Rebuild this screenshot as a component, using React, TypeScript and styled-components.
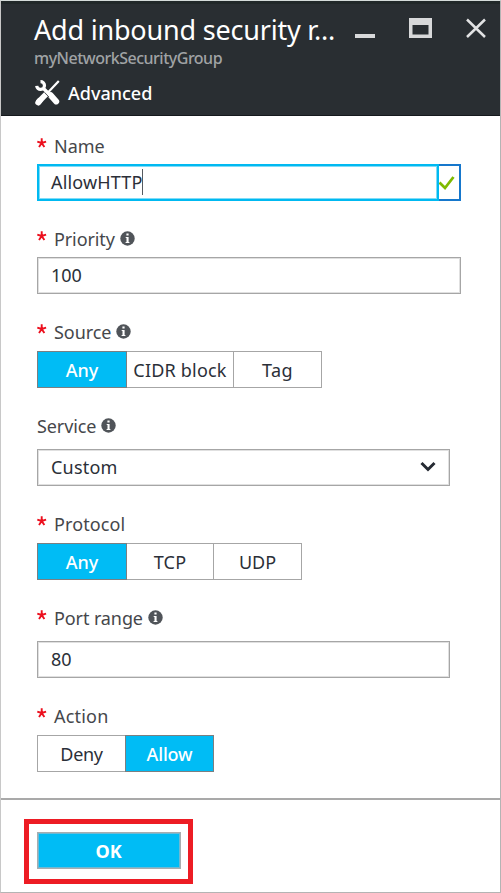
import React from "react";
import styled, { createGlobalStyle } from "styled-components";

const GlobalStyle = createGlobalStyle`
  * { box-sizing: border-box; }
  body { margin: 0; background: #fff; }
`;

const Blade = styled.main`
  display: flex;
  flex-direction: column;
  width: 501px;
  height: 893px;
  border: 1px solid #b4b4b4;
  border-left-color: #c8c8c8;
  border-top-color: #d5dcda;
  background: #fff;
  color: #2b2f38;
  font-family: "Noto Sans", "Open Sans", sans-serif;
  font-size: 18px;
  line-height: 24px;
  overflow: hidden;
`;

const Header = styled.header`
  height: 115px;
  padding: 10px 0 0 33px;
  background: #292e32;
  border-top: 3px solid #212829;
  border-bottom: 1px solid #15191d;
  color: #fff;
`;

const TitleBar = styled.div`
  display: flex;
  justify-content: space-between;
  height: 33px;
  padding-right: 14px;
`;

const Title = styled.h1`
  margin: 0;
  font-size: 27px;
  font-weight: 400;
  line-height: 31px;
  letter-spacing: -0.2px;
  white-space: nowrap;
`;

const WindowButtons = styled.div`
  display: flex;
  padding-top: 3px;

  svg { display: block; }
`;

const Subtitle = styled.div`
  height: 22px;
  color: #a0a3a5;
  font-size: 16px;
  font-weight: 500;
  line-height: 22px;
  letter-spacing: -0.5px;
`;

const Command = styled.div`
  display: flex;
  align-items: center;
  gap: 7px;
  margin-top: 9px;
  height: 30px;
  font-weight: 500;
`;

const Form = styled.form`
  flex: none;
  height: 682px;
  padding: 18px 0 0 36px;
`;

const Field = styled.section<{ $gap: number; $after: number }>`
  display: flex;
  flex-direction: column;
  gap: ${(p) => p.$gap}px;
  margin-bottom: ${(p) => p.$after}px;
`;

const Label = styled.div`
  display: flex;
  align-items: center;
  height: 24px;
  color: #45474b;
`;

const Required = styled.span`
  display: flex;
  width: 17px;
  padding-bottom: 6px;
`;

const Text = styled.span<{ $ls?: number }>`
  letter-spacing: ${(p) => p.$ls ?? 0}px;
  white-space: nowrap;
`;

const InfoSlot = styled.span`
  display: flex;
  margin-left: 5px;
  padding-bottom: 1px;
`;

const InputBox = styled.div<{ $width: number }>`
  display: flex;
  align-items: center;
  justify-content: space-between;
  width: ${(p) => p.$width}px;
  height: 37px;
  padding: 0 13px 2px;
  border: 1px solid #a6a6a6;
  box-shadow: inset 0 0 0 1px #e0e0e0;
`;

const ValidatedInput = styled.div`
  display: flex;
  width: 424px;
  height: 37px;
`;

const FocusedInput = styled.div`
  display: flex;
  align-items: center;
  width: 402px;
  padding: 0 0 2px 12px;
  border: 2px solid #00b9f1;
  box-shadow: inset 0 0 0 1px #7fdcf8;
`;

const Caret = styled.span`
  width: 1px;
  height: 26px;
  background: #555a60;
`;

const ValidMark = styled.div`
  display: flex;
  align-items: center;
  width: 22px;
  border: 2px solid #1677cc;
  border-left: 0;
`;

const Segments = styled.div`
  display: flex;
  height: 37px;
`;

const Segment = styled.div<{ $width: number; $active?: boolean }>`
  position: relative;
  z-index: ${(p) => (p.$active ? 1 : 0)};
  display: flex;
  align-items: center;
  justify-content: center;
  width: ${(p) => p.$width}px;
  border: 1px solid ${(p) => (p.$active ? "#7b7f81" : "#a6a6a6")};
  background: ${(p) => (p.$active ? "#00bcf5" : "#fff")};
  color: ${(p) => (p.$active ? "#fff" : "#2b2f38")};
  font-weight: ${(p) => (p.$active ? 500 : 400)};

  & + & { margin-left: -1px; }
`;

const Footer = styled.footer`
  flex: 1;
  padding: 19px 0 0 23px;
  border-top: 2px solid #a9a9a9;
`;

const Highlight = styled.div`
  display: flex;
  justify-content: center;
  width: 169px;
  height: 65px;
  padding-top: 8px;
  border: 5px solid #ed1c24;
`;

const OkButton = styled.button`
  width: 144px;
  height: 37px;
  padding: 0;
  border: 1px solid #a9adaf;
  box-shadow: inset 0 0 0 1px #6fb9d3;
  background: #00bcf5;
  color: #fff;
  font: 700 18px/24px "Noto Sans", "Open Sans", sans-serif;
`;

const ToolsIcon = () => (
  <svg width="27" height="28" viewBox="0 0 27 28" fill="none" stroke="#fff">
    <path d="M6.500 2.600a3.900 3.900 0 1 1-3.800 4.200" strokeWidth="3.200" />
    <path d="M9 9l8 8" strokeWidth="3.400" />
    <path d="M16.700 16.200l5.500 6.200" strokeWidth="6" strokeLinecap="round" />
    <path d="M24.800 2 13.500 14" strokeWidth="2.200" />
    <path d="M12.600 14.600 4 23.500" strokeWidth="5.600" />
    <path d="M5.500 22 4.300 23.500" strokeWidth="6" strokeLinecap="round" />
    <path d="M10.300 13.400l4.800 4.700" stroke="#292e32" strokeWidth=".8" />
  </svg>
);

const MinimizeIcon = () => (
  <svg width="20" height="24" viewBox="0 0 20 24">
    <path d="M0 17h20v4H0z" fill="#d8d9da" />
  </svg>
);

const MaximizeIcon = () => (
  <svg width="23" height="24" viewBox="0 0 23 24">
    <path d="M0 1h23v20H0zM3.500 8v9.500h16V8z" fill="#d8d9da" fillRule="evenodd" />
  </svg>
);

const CloseIcon = () => (
  <svg width="20" height="24" viewBox="0 0 20 24" fill="none" stroke="#e2e3e4" strokeWidth="2.500">
    <path d="M1 2.500l18 17.500M19 2.500 1 20" />
  </svg>
);

const ButtonSlot = styled.span<{ $before?: number }>`
  margin-left: ${(p) => p.$before ?? 0}px;
`;

const Asterisk = () => (
  <svg width="10" height="11" viewBox="0 0 10 11" fill="none" stroke="#ec0f1d" strokeWidth="1.900">
    <path d="M4.700 5V.3M4.700 5 .3 3.600M4.700 5l4.400-1.400M4.700 5 2 9M4.700 5l2.700 4" />
  </svg>
);

const InfoIcon = () => (
  <svg width="15" height="15" viewBox="0 0 15 15">
    <circle cx="7.500" cy="7.500" r="7.200" fill="#505459" />
    <path d="M6.400 2.600h2.200v2H6.400zM5.700 6h2.900v4.900h.8V12H5.600v-1.100h.9V7.100h-.8z" fill="#fff" />
  </svg>
);

interface FieldLabelProps {
  text: string;
  ls?: number;
  required?: boolean;
  info?: boolean;
}

const FieldLabel = ({ text, ls, required = true, info }: FieldLabelProps) => (
  <Label>
    {required && <Required><Asterisk /></Required>}
    <Text $ls={ls}>{text}</Text>
    {info && <InfoSlot><InfoIcon /></InfoSlot>}
  </Label>
);

export default function App() {
  return (
    <>
      <GlobalStyle />
      <Blade>
        <Header>
          <TitleBar>
            <Title>Add inbound security r...</Title>
            <WindowButtons>
              <ButtonSlot><MinimizeIcon /></ButtonSlot>
              <ButtonSlot $before={34}><MaximizeIcon /></ButtonSlot>
              <ButtonSlot $before={34}><CloseIcon /></ButtonSlot>
            </WindowButtons>
          </TitleBar>
          <Subtitle>myNetworkSecurityGroup</Subtitle>
          <Command>
            <ToolsIcon />
            <Text>Advanced</Text>
          </Command>
        </Header>
        <Form>
          <Field $gap={6} $after={26}>
            <FieldLabel text="Name" />
            <ValidatedInput>
              <FocusedInput><Text $ls={0.15}>AllowHTTP</Text><Caret /></FocusedInput>
              <ValidMark>
                <svg width="17" height="16" viewBox="0 0 17 16" fill="none" stroke="#7fba00" strokeWidth="2.800">
                  <path d="M.5 7.500l5.500 5.500L14.500 2" />
                </svg>
              </ValidMark>
            </ValidatedInput>
          </Field>
          <Field $gap={6} $after={26}>
            <FieldLabel text="Priority" ls={-0.1} info />
            <InputBox $width={424}><Text>100</Text></InputBox>
          </Field>
          <Field $gap={7} $after={26}>
            <FieldLabel text="Source" ls={-0.05} info />
            <Segments>
              <Segment $width={90} $active><Text>Any</Text></Segment>
              <Segment $width={108}><Text $ls={0.2}>CIDR block</Text></Segment>
              <Segment $width={89}><Text $ls={0.5}>Tag</Text></Segment>
            </Segments>
          </Field>
          <Field $gap={11} $after={26}>
            <FieldLabel text="Service" ls={-0.1} required={false} info />
            <InputBox $width={413}>
              <Text $ls={0.2}>Custom</Text>
              <svg width="16" height="12" viewBox="0 0 16 12" fill="none" stroke="#252a33" strokeWidth="3">
                <path d="m1.500 2 6.500 6.500L14.500 2" />
              </svg>
            </InputBox>
          </Field>
          <Field $gap={7} $after={26}>
            <FieldLabel text="Protocol" ls={0.1} />
            <Segments>
              <Segment $width={90} $active><Text>Any</Text></Segment>
              <Segment $width={88}><Text $ls={0.2}>TCP</Text></Segment>
              <Segment $width={89}><Text>UDP</Text></Segment>
            </Segments>
          </Field>
          <Field $gap={11} $after={26}>
            <FieldLabel text="Port range" ls={-0.1} info />
            <InputBox $width={413}><Text>80</Text></InputBox>
          </Field>
          <Field $gap={7} $after={0}>
            <FieldLabel text="Action" ls={0.2} />
            <Segments>
              <Segment $width={89}><Text $ls={-0.3}>Deny</Text></Segment>
              <Segment $width={89} $active><Text $ls={-0.16}>Allow</Text></Segment>
            </Segments>
          </Field>
        </Form>
        <Footer>
          <Highlight><OkButton type="button">OK</OkButton></Highlight>
        </Footer>
      </Blade>
    </>
  );
}
